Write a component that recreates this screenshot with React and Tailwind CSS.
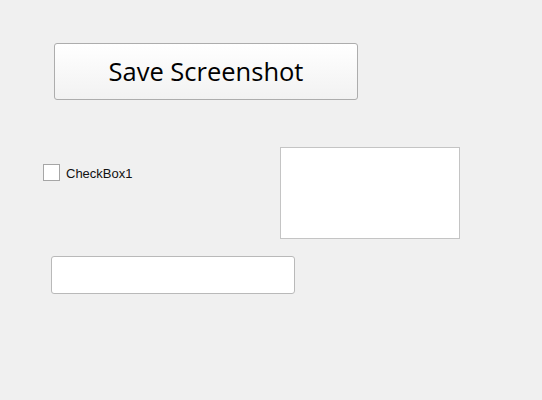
export default function App() {
  return (
    <div className="w-[542px] h-[400px] bg-[#f0f0f0] pt-[43px] overflow-hidden font-['Open_Sans',sans-serif]">
      <button className="ml-[54px] w-[304px] h-[57px] rounded-[3px] border border-[#adadad] bg-gradient-to-b from-white to-[#f2f2f2] text-[25.5px] leading-none text-black font-['Open_Sans',sans-serif]">
        Save Screenshot
      </button>

      <div className="flex mt-[47px]">
        <label className="w-[280px] pl-[43px] pt-[17px] flex items-start gap-[6px] self-start">
          <span className="w-[17px] h-[17px] border border-[#a6a6a6] bg-white shrink-0" />
          <span className="text-[13px] leading-[17px] pt-px text-[#111] font-['Liberation_Sans',sans-serif]">
            CheckBox1
          </span>
        </label>
        <div className="w-[180px] h-[92px] border border-[#c4c4c4] bg-white" />
      </div>

      <input
        type="text"
        className="block ml-[51px] mt-[17px] w-[244px] h-[38px] rounded-[3px] border border-[#b9b9b9] bg-white outline-none"
      />
    </div>
  );
}
